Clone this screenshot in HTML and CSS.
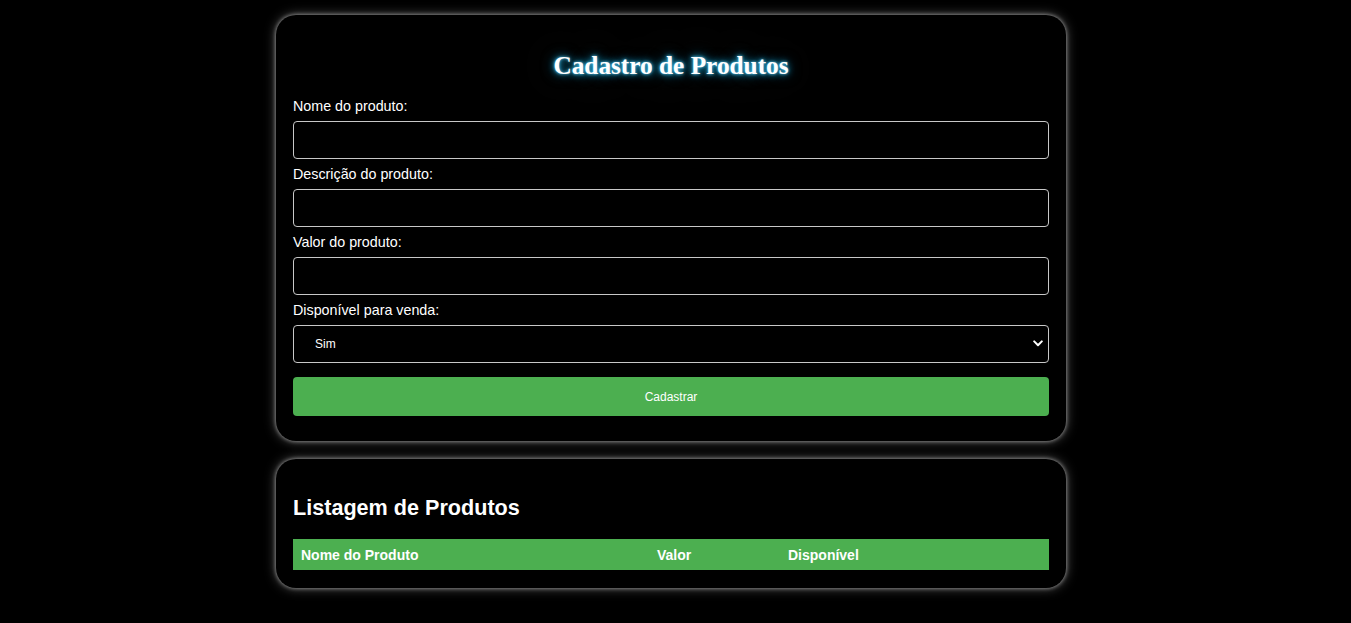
FILE: index.html
```html
<!DOCTYPE html>
<html lang="pt-BR">
<head>
<meta charset="utf-8">
<title>Cadastro de Produtos</title>
<link rel="stylesheet" href="styles.css">
</head>
<body>
<main class="page">
  <section class="card card-form">
    <h1 class="title">Cadastro de Produtos</h1>
    <form class="form">
      <label class="label" for="nome">Nome do produto:</label>
      <input class="field" id="nome" type="text">
      <label class="label" for="desc">Descrição do produto:</label>
      <input class="field" id="desc" type="text">
      <label class="label" for="valor">Valor do produto:</label>
      <input class="field" id="valor" type="text">
      <label class="label" for="disp">Disponível para venda:</label>
      <div class="select-wrap">
        <select class="field select" id="disp">
          <option>Sim</option>
          <option>Não</option>
        </select>
        <svg class="chevron" width="10" height="7" viewBox="0 0 10 7"><path d="M1.2 1.4 L5 5.2 L8.8 1.4" fill="none" stroke="#fff" stroke-width="2" stroke-linecap="round" stroke-linejoin="round"/></svg>
      </div>
      <button class="btn" type="button">Cadastrar</button>
    </form>
  </section>
  <section class="card card-list">
    <h2 class="subtitle">Listagem de Produtos</h2>
    <table class="table">
      <thead>
        <tr>
          <th class="col-nome">Nome do Produto</th>
          <th class="col-valor">Valor</th>
          <th class="col-disp">Disponível</th>
        </tr>
      </thead>
      <tbody></tbody>
    </table>
  </section>
</main>
</body>
</html>
```

FILE: styles.css
```css
html, body {
  background: #000;
}
body {
  margin: 0;
  font-family: "Liberation Sans", Arial, sans-serif;
  color: #fff;
}
.page {
  display: flex;
  flex-direction: column;
  align-items: center;
  gap: 18px;
  padding: 15px 9px 30px 0;
}
.card {
  box-sizing: border-box;
  width: 790px;
  background: #000;
  border-radius: 20px;
  box-shadow: 0 0 4px rgba(255,255,255,0.55), 0 0 12px rgba(255,255,255,0.35);
  padding: 0 17px;
}
.card-form {
  padding-bottom: 25px;
}
.card-list {
  padding-bottom: 18px;
}
.title {
  margin: 35px 0 18px;
  font-family: "Liberation Serif", "Times New Roman", serif;
  font-weight: bold;
  font-size: 25.3px;
  line-height: 30px;
  text-align: center;
  color: #fff;
  text-shadow: 0 0 3px #5fd3ff, 0 0 7px #1fb4e8, 0 0 14px rgba(0,150,200,0.6), 0 0 45px rgba(255,255,255,0.3);
}
.form {
  display: flex;
  flex-direction: column;
}
.label {
  display: block;
  font-size: 14.3px;
  line-height: 16px;
  margin-bottom: 7px;
}
.field {
  box-sizing: border-box;
  width: 100%;
  height: 38px;
  margin: 0 0 7px;
  background: #000;
  color: #fff;
  border: 1px solid #c8c8c8;
  border-radius: 4px;
  font-family: "Liberation Sans", Arial, sans-serif;
  font-size: 12px;
  padding: 0 10px;
  outline: none;
}
.select-wrap {
  position: relative;
  margin-bottom: 7px;
}
.select {
  appearance: none;
  -webkit-appearance: none;
  margin: 0;
  padding-left: 21px;
}
.chevron {
  position: absolute;
  right: 6px;
  top: 15px;
  pointer-events: none;
}
.btn {
  box-sizing: border-box;
  width: 100%;
  height: 39px;
  margin-top: 7px;
  border: none;
  border-radius: 4px;
  background: #4caf50;
  color: #fff;
  font-family: "Liberation Sans", Arial, sans-serif;
  font-size: 12px;
}
.subtitle {
  margin: 36px 0 18px;
  font-size: 21.6px;
  line-height: 26px;
  font-weight: bold;
}
.table {
  width: 100%;
  border-collapse: collapse;
  table-layout: fixed;
}
.table th {
  background: #4caf50;
  color: #fff;
  text-align: left;
  font-size: 14px;
  font-weight: bold;
  height: 31px;
  padding: 0 8px;
  box-sizing: border-box;
}
.col-nome { width: 356px; }
.col-valor { width: 131px; }
.col-disp { width: 269px; }
```
